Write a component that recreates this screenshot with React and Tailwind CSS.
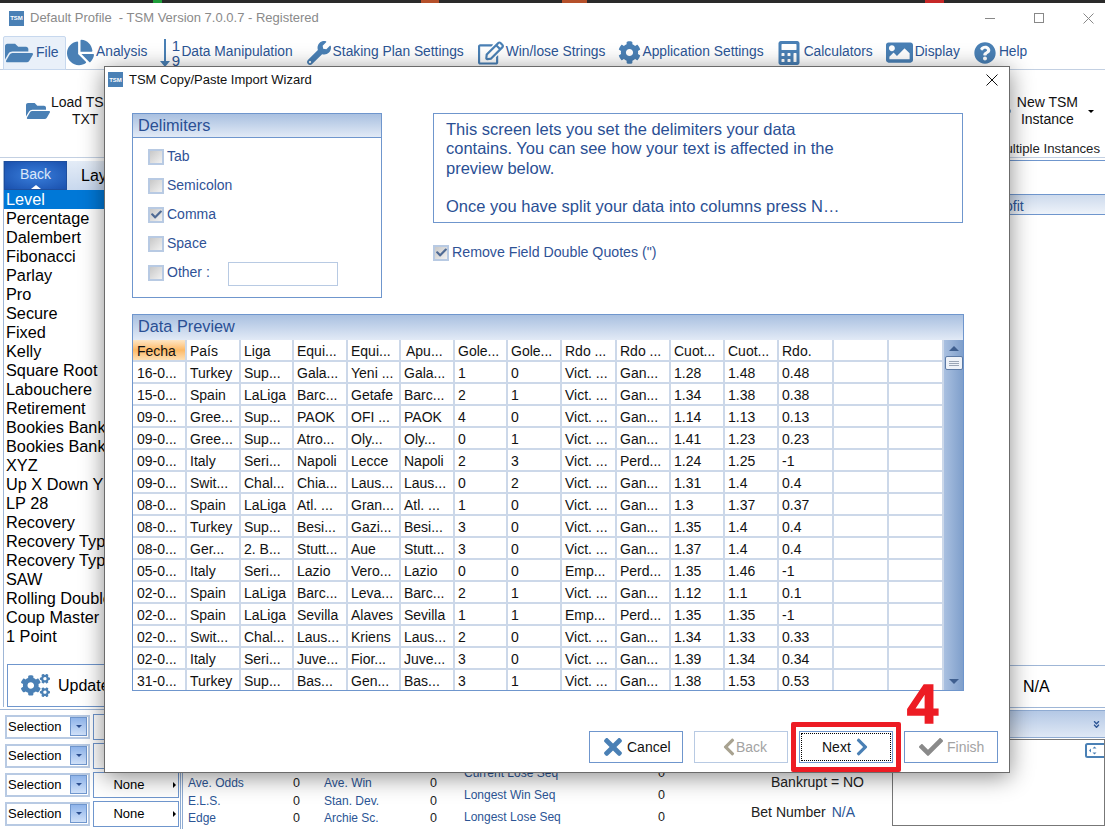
import React from "react";
import { FaFolderOpen, FaChartPie, FaWrench, FaRegEdit, FaCog, FaCalculator, FaImage, FaQuestionCircle, FaCogs, FaTimes, FaChevronLeft, FaChevronRight, FaCheck, FaAngleDoubleDown, FaPlus } from "react-icons/fa";

const ICON = "#4a80b5";

function Logo() {
  return (
    <div className="w-[15px] h-[15px] bg-[#4a80b5] flex items-center justify-center text-white text-[6px] font-bold leading-none shrink-0">TSM</div>
  );
}

function MenuText({ children }) {
  return <span className="text-[13.8px] text-[#2c5595] whitespace-nowrap">{children}</span>;
}

function Menu() {
  return (
    <div className="h-[34px] mt-[3px] flex items-center border-b border-[#c3d0e2] pl-[3px] relative">
      <div className="h-[34px] w-[63px] flex items-center gap-[3px] pl-[1px] border border-[#c7d8ee] bg-[#e9f0f9] rounded-t-[2px]">
        <FaFolderOpen size={28} color={ICON} />
        <span className="text-[14px] text-[#2c5595]">File</span>
      </div>
      <div className="flex items-center gap-[2px] ml-[1px]">
        <FaChartPie size={27} color={ICON} />
        <MenuText>Analysis</MenuText>
      </div>
      <div className="flex items-center gap-[1px] ml-[13px]">
        <div className="flex items-center h-[32px]">
          <svg width="10" height="30" viewBox="0 0 10 30"><path d="M4 1h2v22h4l-5 6-5-6h4z" fill={ICON} /></svg>
          <div className="flex flex-col w-[9px] items-center text-[15px] leading-[15px] font-medium text-[#2c5595] ml-[1px]">
            <span>1</span>
            <span>9</span>
          </div>
        </div>
        <MenuText>Data Manipulation</MenuText>
      </div>
      <div className="flex items-center gap-[2px] ml-[14px]">
        <FaWrench size={24} color={ICON} />
        <MenuText>Staking Plan Settings</MenuText>
      </div>
      <div className="flex items-center gap-[2px] ml-[14px]">
        <FaRegEdit size={26} color={ICON} />
        <MenuText>Win/lose Strings</MenuText>
      </div>
      <div className="flex items-center gap-[1px] ml-[13px]">
        <FaCog size={23} color={ICON} />
        <MenuText>Application Settings</MenuText>
      </div>
      <div className="flex items-center gap-[4px] ml-[15px]">
        <FaCalculator size={24} color={ICON} className="-mx-[1.5px]" />
        <MenuText>Calculators</MenuText>
      </div>
      <div className="flex items-center gap-[2px] ml-[13px]">
        <FaImage size={27} color={ICON} />
        <MenuText>Display</MenuText>
      </div>
      <div className="flex items-center gap-[3px] ml-[14px]">
        <FaQuestionCircle size={22} color={ICON} />
        <MenuText>Help</MenuText>
      </div>
    </div>
  );
}

const plans = ["Level","Percentage","Dalembert","Fibonacci","Parlay","Pro","Secure","Fixed","Kelly","Square Root","Labouchere","Retirement","Bookies Bank","Bookies Bank","XYZ","Up X Down Y","LP 28","Recovery","Recovery Typ","Recovery Typ","SAW","Rolling Double","Coup Master","1 Point"];

function SelectionRow({ none }) {
  return (
    <div className="flex items-center h-[29px] gap-[3px]">
      <div className="w-[85px] h-[24px] border-2 border-[#b8cae3] flex items-center justify-between pl-[1px] pr-[1px]">
        <span className="text-[13px] text-black">Selection</span>
        <div className="w-[17px] h-[19px] border border-[#6f96cd] bg-linear-to-b from-[#8fb4ea] to-[#cfe0f8] flex items-center justify-center">
          <div className="w-0 h-0 border-l-[3px] border-r-[3px] border-t-[3px] border-l-transparent border-r-transparent border-t-[#2c4f90]" />
        </div>
      </div>
      <div className="w-[86px] h-[26px] border border-[#6f96cd] flex items-center justify-center pr-[14px] relative">
        {none && <span className="text-[13px] text-black">None</span>}
        {none && <div className="absolute right-[2px] w-0 h-0 border-t-[3px] border-b-[3px] border-l-[3px] border-t-transparent border-b-transparent border-l-black" />}
      </div>
    </div>
  );
}

function LeftColumn() {
  return (
    <div className="w-[180px] shrink-0 pl-[3px] pt-[3px] flex flex-col overflow-hidden">
      <div className="border-l border-[#9fb6d6] flex flex-col">
        <div className="flex h-[29px]">
          <div className="w-[63px] bg-radial from-[#3a7fdc] to-[#1a50ad] border border-[#1d4e9e] flex items-center justify-center pb-[2px] text-[14px] text-[#dbe8f8] relative">
            Back
            <div className="absolute bottom-0 left-[26px] w-0 h-0 border-l-[5px] border-r-[5px] border-b-[4px] border-l-transparent border-r-transparent border-b-white" />
          </div>
          <div className="flex-1 bg-linear-to-b from-[#e4ecf7] to-[#c8d8ee] flex items-center pl-[14px] text-[16px] text-black">Layout</div>
        </div>
        {plans.map((p, i) => (
          <div key={i} className={`h-[19px] leading-[19px] text-[16.3px] pl-[2px] whitespace-nowrap ${i === 0 ? "bg-[#0078d7] text-white" : "text-black"}`}>{p}</div>
        ))}
        <div className="h-[18px]" />
        <div className="ml-[3px] w-[170px] h-[43px] border border-[#6f96cd] flex items-center pl-[13px] gap-[8px]">
          <FaCogs size={29} color={ICON} />
          <span className="text-[16px] text-black">Update</span>
        </div>
      </div>
      <div className="h-[3px] border-b border-[#9fb6d6] -ml-[3px]" />
      <div className="pl-[2px] pt-[2px]">
        <SelectionRow />
        <SelectionRow />
        <SelectionRow none />
        <SelectionRow none />
      </div>
    </div>
  );
}

function Label({ children, className = "" }) {
  return <div className={`h-[17.5px] leading-[17.5px] text-[12px] text-[#2c5595] whitespace-nowrap ${className}`}>{children}</div>;
}
function Val({ children }) {
  return <div className="h-[17.5px] leading-[17.5px] text-[12.5px] text-[#222] whitespace-nowrap">{children}</div>;
}

function RightColumn() {
  return (
    <div className="flex-1 flex flex-col border-l-[3px] border-double border-[#8fabd2] h-full min-w-0">
      <div className="mt-[2px] border-t border-[#6f96cd]" />
      <div className="mt-[33px] h-[21px] border-y border-[#6f96cd] bg-linear-to-b from-[#cddaec] to-[#eef3fa] pl-[808px] pt-[4px] flex items-center text-[14px] text-[#2c5595]">Profit</div>
      <div className="mt-[450px] h-[43px] border-y border-[#9fb6d6] pl-[840px] flex items-center text-[16px] text-black">N/A</div>
      <div className="mt-[2px] h-[28px] border-y border-[#8fabd2] bg-linear-to-b from-[#b4c8e5] to-[#dfe8f5] flex items-center justify-end pr-[4px]">
        <FaAngleDoubleDown size={9} color="#2c5595" />
      </div>
      <div className="flex flex-1 pl-[5px]">
        <div className="w-[105px] pt-[37px]">
          <Label>Ave. Odds</Label>
          <Label>E.L.S.</Label>
          <Label>Edge</Label>
        </div>
        <div className="w-[31px] pt-[37px]">
          <Val>0</Val><Val>0</Val><Val>0</Val>
        </div>
        <div className="w-[106px] pt-[37px]">
          <Label>Ave. Win</Label>
          <Label>Stan. Dev.</Label>
          <Label>Archie Sc.</Label>
        </div>
        <div className="w-[34px] pt-[37px]">
          <Val>0</Val><Val>0</Val><Val>0</Val>
        </div>
        <div className="w-[194px] pt-[27px] flex flex-col gap-[4.5px]">
          <Label>Current Lose Seq</Label>
          <Label>Longest Win Seq</Label>
          <Label>Longest Lose Seq</Label>
        </div>
        <div className="w-[113px] pt-[27px] flex flex-col gap-[4.5px]">
          <Val>0</Val><Val>0</Val><Val>0</Val>
        </div>
        <div className="w-[121px] pt-[36px]">
          <div className="text-[14px] text-[#222] leading-[17px]">Bankrupt = NO</div>
          <div className="text-[14px] text-[#222] mt-[13px] -ml-[20px] leading-[17px] flex gap-[6px]">
            <span>Bet Number</span>
            <span className="text-[#2c5595]">N/A</span>
          </div>
        </div>
        <div className="flex-1 h-[87px] mt-[1px] border border-[#777] flex justify-end pt-[3px] overflow-hidden">
          <svg width="19" height="15" viewBox="0 0 19 15" className="shrink-0">
            <rect x="1" y="1" width="20" height="13" rx="1.5" fill="white" stroke="#4a80b5" strokeWidth="2" />
            <path d="M9.5 3.5l2 2h-4zM9.5 11.5l2-2h-4zM4 7.5l2-2v4z" fill="#4a80b5" />
          </svg>
        </div>
      </div>
    </div>
  );
}

function Checkbox({ checked }) {
  return (
    <div className="w-4 h-4 border-2 border-[#b8cae3] shrink-0">
      <div className="w-full h-full bg-linear-to-br from-[#c8c8c8] to-[#f2f2f2] flex items-center justify-center">
        {checked && <FaCheck size={11} color="#4f6a94" />}
      </div>
    </div>
  );
}

function Delim({ label, checked, children }) {
  return (
    <div className="h-[29px] flex items-center pl-[15px]">
      <Checkbox checked={checked} />
      <span className="ml-[3px] text-[14px] text-[#2f5296]">{label}</span>
      {children}
    </div>
  );
}

const header = ["Fecha","País","Liga","Equi...","Equi...","Apu...","Gole...","Gole...","Rdo ...","Rdo ...","Cuot...","Cuot...","Rdo.","",""];
const rows = [
  ["16-0...","Turkey","Sup...","Gala...","Yeni ...","Gala...","1","0","Vict. ...","Gan...","1.28","1.48","0.48"],
  ["15-0...","Spain","LaLiga","Barc...","Getafe","Barc...","2","1","Vict. ...","Gan...","1.34","1.38","0.38"],
  ["09-0...","Gree...","Sup...","PAOK","OFI ...","PAOK","4","0","Vict. ...","Gan...","1.14","1.13","0.13"],
  ["09-0...","Gree...","Sup...","Atro...","Oly...","Oly...","0","1","Vict. ...","Gan...","1.41","1.23","0.23"],
  ["09-0...","Italy","Seri...","Napoli","Lecce","Napoli","2","3","Vict. ...","Perd...","1.24","1.25","-1"],
  ["09-0...","Swit...","Chal...","Chia...","Laus...","Laus...","0","2","Vict. ...","Gan...","1.31","1.4","0.4"],
  ["08-0...","Spain","LaLiga","Atl. ...","Gran...","Atl. ...","1","0","Vict. ...","Gan...","1.3","1.37","0.37"],
  ["08-0...","Turkey","Sup...","Besi...","Gazi...","Besi...","3","0","Vict. ...","Gan...","1.35","1.4","0.4"],
  ["08-0...","Ger...","2. B...","Stutt...","Aue","Stutt...","3","0","Vict. ...","Gan...","1.37","1.4","0.4"],
  ["05-0...","Italy","Seri...","Lazio","Vero...","Lazio","0","0","Emp...","Perd...","1.35","1.46","-1"],
  ["02-0...","Spain","LaLiga","Barc...","Leva...","Barc...","2","1","Vict. ...","Gan...","1.12","1.1","0.1"],
  ["02-0...","Spain","LaLiga","Sevilla","Alaves","Sevilla","1","1","Emp...","Perd...","1.35","1.35","-1"],
  ["02-0...","Swit...","Chal...","Laus...","Kriens","Laus...","2","0","Vict. ...","Gan...","1.34","1.33","0.33"],
  ["02-0...","Italy","Seri...","Juve...","Fior...","Juve...","3","0","Vict. ...","Gan...","1.39","1.34","0.34"],
  ["31-0...","Turkey","Sup...","Bas...","Gen...","Bas...","3","1","Vict. ...","Gan...","1.38","1.53","0.53"],
];

function Table() {
  return (
    <div className="flex h-[350px]">
      <div className="w-[811px] overflow-hidden">
        <div className="grid grid-cols-[54px_54px_53px_54px_53px_54px_53px_54px_55px_54px_54px_54px_55px_55px_55px] auto-rows-[22px]">
          {header.map((h, i) => (
            <div key={i} className={`border-r-2 border-b-2 border-[#ccd8e9] text-[14px] leading-[22px] whitespace-nowrap overflow-hidden text-[#111] ${i === 0 ? "pl-[4px] bg-linear-to-b from-[#fde6c4] via-[#fdb964] to-[#fde0b4]" : i === 5 ? "pl-[5px]" : "pl-[3px]"}`}>{h}</div>
          ))}
          {rows.flatMap((r, ri) =>
            [...r, "", ""].map((c, ci) => (
              <div key={ri + "-" + ci} className={`border-r-2 border-b-2 border-[#ccd8e9] text-[14px] leading-[22px] whitespace-nowrap overflow-hidden text-[#111] ${ci === 0 ? "pl-[4px]" : "pl-[3px]"}`}>{c}</div>
            ))
          )}
        </div>
      </div>
      <div className="w-[19px] bg-linear-to-r from-[#a9c0e0] to-[#7f9fcb] flex flex-col items-center pt-[6px]">
        <div className="w-0 h-0 border-l-[5px] border-r-[5px] border-b-[5px] border-l-transparent border-r-transparent border-b-[#3f5f8f]" />
        <div className="w-[18px] h-[14px] mt-[5px] bg-[#eef2f8] border border-[#5c7aa5] rounded-[2px] flex flex-col items-center justify-center gap-[1px]">
          <div className="w-[10px] h-px bg-[#9aa5b5]" />
          <div className="w-[10px] h-px bg-[#9aa5b5]" />
          <div className="w-[10px] h-px bg-[#9aa5b5]" />
        </div>
        <div className="flex-1" />
        <div className="w-0 h-0 mb-[6px] border-l-[5px] border-r-[5px] border-t-[5px] border-l-transparent border-r-transparent border-t-[#3f5f8f]" />
      </div>
    </div>
  );
}

function Wizard() {
  return (
    <div className="absolute left-[104px] top-[66px] w-[906px] h-[707px] bg-white border border-[#6b6b6b] shadow-[0_4px_22px_rgba(0,0,0,0.45)] flex flex-col">
      <div className="h-[25px] flex items-center pl-[3px] pr-[11px] shrink-0">
        <Logo />
        <span className="ml-[6px] text-[13px] text-[#111]">TSM Copy/Paste Import Wizard</span>
        <div className="flex-1" />
        <svg width="12" height="12" viewBox="0 0 12 12"><path d="M0.5 0.5l11 11M11.5 0.5l-11 11" stroke="#111" strokeWidth="1" /></svg>
      </div>
      <div className="pl-[27px] pt-[21px] flex">
        <div className="w-[250px] h-[185px] border border-[#6f96cd] shrink-0">
          <div className="h-[24px] border-b border-[#6f96cd] bg-linear-to-b from-[#a9c0e0] to-[#e2eaf6] pl-[5px] flex items-center text-[16.3px] text-[#2a4f94]">Delimiters</div>
          <div className="pt-[4px]">
            <Delim label="Tab" />
            <Delim label="Semicolon" />
            <Delim label="Comma" checked />
            <Delim label="Space" />
            <Delim label="Other :">
              <div className="ml-[18px] mt-[3px] w-[110px] h-[24px] border border-[#b8cae3]" />
            </Delim>
          </div>
        </div>
        <div className="ml-[51px] w-[530px]">
          <div className="h-[110px] border border-[#6f96cd] pl-[12px] pt-[6px] text-[16.5px] leading-[19.3px] text-[#2a4f94]">
            <div>This screen lets you set the delimiters your data</div>
            <div>contains. You can see how your text is affected in the</div>
            <div>preview below.</div>
            <div className="h-[19.3px]" />
            <div>Once you have split your data into columns press N…</div>
          </div>
          <div className="mt-[19px] flex items-center">
            <Checkbox checked />
            <span className="ml-[3px] text-[14.2px] text-[#2f5296]">Remove Field Double Quotes (")</span>
          </div>
        </div>
      </div>
      <div className="ml-[27px] mt-[16px] w-[832px] border border-[#6f96cd]">
        <div className="h-[25px] bg-linear-to-b from-[#a9c0e0] to-[#e2eaf6] pl-[5px] pb-[2px] flex items-center text-[16.3px] text-[#2a4f94]">Data Preview</div>
        <Table />
      </div>
      <div className="mt-[40px] flex pl-[484px]">
        <div className="w-[94px] h-[32px] border border-[#6f96cd] flex items-center pl-[14px] gap-[5px] text-[14px] text-[#111]">
          <FaTimes size={26} color={ICON} className="shrink-0 -mx-[4px]" />Cancel
        </div>
        <div className="ml-[11px] w-[94px] h-[32px] border border-[#b8cae3] flex items-center pl-[24px] text-[14px] text-[#a3a3a3]">
          <FaChevronLeft size={20} color="#a8a290" className="shrink-0 -mr-[3px]" />Back
        </div>
        <div className="ml-[11px] w-[94px] h-[32px] border border-[#6f96cd] p-[1px]">
          <div className="w-full h-full border border-dotted border-black flex items-center pl-[20px] gap-[1px] text-[14px] text-[#111]">
            Next<FaChevronRight size={20} color={ICON} className="shrink-0" />
          </div>
        </div>
        <div className="ml-[11px] w-[94px] h-[32px] border border-[#6f96cd] flex items-center pl-[14px] gap-[4px] text-[14px] text-[#a3a3a3]">
          <FaCheck size={24} color="#8a8a8a" className="shrink-0" />Finish
        </div>
      </div>
    </div>
  );
}

export default function App() {
  return (
    <div className="relative w-[1105px] h-[829px] overflow-hidden bg-white font-['Liberation_Sans',sans-serif] flex flex-col">
      <div className="h-[3px] bg-[#2a2a2a] flex shrink-0">
        <div className="ml-[153px] w-[9px] bg-[#1f9d3a]" />
        <div className="ml-[259px] w-[18px] bg-[#b5502a]" />
        <div className="ml-[123px] w-[25px] bg-[#b5502a]" />
        <div className="ml-[338px] w-[19px] bg-[#c62828]" />
      </div>
      <div className="h-[30px] flex items-center pl-[9px] shrink-0">
        <Logo />
        <span className="ml-[6px] text-[13px] text-[#8a8a8a] whitespace-pre">Default Profile  - TSM Version 7.0.0.7 - Registered</span>
        <div className="flex-1" />
        <div className="w-[10px] h-px bg-[#888] mr-[39px]" />
        <div className="w-[10px] h-[10px] border border-[#888] mr-[39px]" />
        <svg width="11" height="11" viewBox="0 0 11 11" className="mr-[11px]"><path d="M0.5 0.5l10 10M10.5 0.5l-10 10" stroke="#888" strokeWidth="1" /></svg>
      </div>
      <Menu />
      <div className="h-[87px] flex justify-between shrink-0 relative">
        <div className="flex items-center pl-[26px] pb-[5px]">
          <FaFolderOpen size={24} color={ICON} />
          <div className="ml-[1px] text-center text-[14px] leading-[17px] text-[#111]">Load TSM<br /><span className="pl-[4px]">TXT</span></div>
        </div>
        <div className="flex flex-col items-end pr-[5px]">
          <div className="flex items-center mt-[24px] pr-[6px]">
            <FaPlus size={20} color={ICON} />
            <div className="ml-[5px] text-center text-[14px] leading-[17px] text-[#111]">New TSM<br />Instance</div>
            <div className="ml-[10px] w-0 h-0 border-l-[3px] border-r-[3px] border-t-[3px] border-l-transparent border-r-transparent border-t-black" />
          </div>
          <div className="text-[13.2px] text-[#222] mt-[14px] leading-[14px]">Multiple Instances</div>
        </div>
      </div>
      <div className="flex flex-1 border-t border-[#c3d0e2] min-h-0">
        <LeftColumn />
        <RightColumn />
      </div>
      <Wizard />
      <div className="absolute left-[791px] top-[722px] w-[110px] h-[50px] border-[5px] border-[#ed1c24] rounded-[2px]" />
      <div className="absolute left-[907px] top-[672px] text-[56px] leading-[64px] font-bold text-[#ed1c24] [-webkit-text-stroke:1.5px_#ed1c24]">4</div>
    </div>
  );
}
